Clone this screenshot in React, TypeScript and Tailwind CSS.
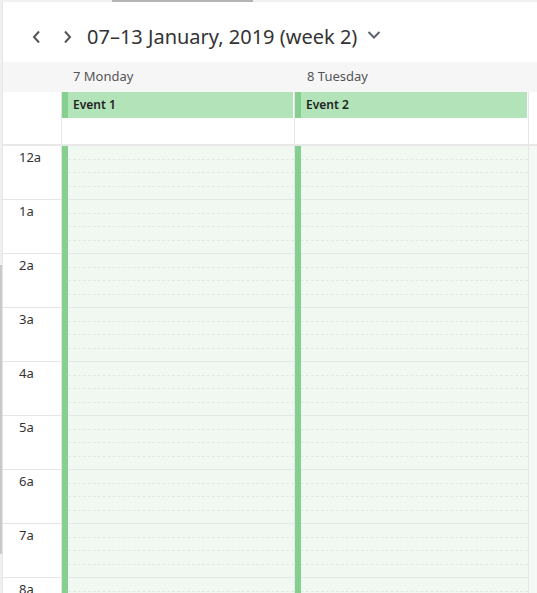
import React from "react";

const hours = ["12a", "1a", "2a", "3a", "4a", "5a", "6a", "7a", "8a", "9a"];

function HourBlock({ label }: { label?: string }) {
  return (
    <div className="h-[54px] shrink-0 border-b border-[#e6e6e6] flex flex-col">
      {label !== undefined ? (
        <div className="pl-[16px] pt-[3px] text-[13px] leading-[16px] text-[#333]">{label}</div>
      ) : (
        <>
          <div className="flex-1 border-b border-dashed border-[#e3e8e3]" />
          <div className="flex-1 border-b border-dashed border-[#e3e8e3]" />
          <div className="flex-1 border-b border-dashed border-[#e3e8e3]" />
          <div className="flex-1" />
        </>
      )}
    </div>
  );
}

function DayColumn({ event, width }: { event: string; width: string }) {
  return (
    <div className={`${width} shrink-0 flex flex-col border-l border-[#e6e6e6]`}>
      <div className="h-[52px] shrink-0 bg-white">
        <div className="h-[26px] mr-[1px] flex bg-[#b3e3b8]">
          <div className="w-[6px] bg-[#86d08f]" />
          <div className="pl-[5px] text-[12px] font-semibold leading-[26px] text-[#222]">{event}</div>
        </div>
      </div>
      <div className="flex shrink-0 border-t-2 border-[#e8e8e8]">
        <div className="w-[6px] bg-[#86d08f]" />
        <div className="flex-1 bg-[#f1f7f1] flex flex-col">
          {hours.map((h) => (
            <HourBlock key={h} />
          ))}
        </div>
      </div>
    </div>
  );
}

export default function App() {
  return (
    <div
      className="w-[537px] h-[593px] overflow-hidden bg-white flex flex-col"
      style={{ fontFamily: '"Noto Sans", "Open Sans", sans-serif' }}
    >
      {/* top scrollbar */}
      <div className="h-[2px] shrink-0 bg-[#f0f0f0] flex">
        <div className="w-[112px]" />
        <div className="w-[141px] bg-[#b5b5b5]" />
      </div>
      <div className="flex flex-1 min-h-0">
        {/* left scrollbar strip */}
        <div className="w-[2px] shrink-0 bg-[#f0f0f0] flex flex-col">
          <div className="h-[263px] shrink-0" />
          <div className="h-[289px] shrink-0 bg-[#c9c9c9]" />
        </div>
        <div className="flex-1 flex flex-col border-l border-[#e6e6e6] min-w-0 overflow-hidden">
          {/* title row */}
          <div className="h-[60px] shrink-0 flex items-center pt-[10px]">
            <div className="w-[28px]" />
            <svg width="12" height="14" viewBox="0 0 12 14" className="text-[#555]">
              <polyline points="8,1.5 3,7 8,12.5" fill="none" stroke="currentColor" strokeWidth="2" />
            </svg>
            <div className="w-[19px]" />
            <svg width="12" height="14" viewBox="0 0 12 14" className="text-[#555]">
              <polyline points="3,1.5 8,7 3,12.5" fill="none" stroke="currentColor" strokeWidth="2" />
            </svg>
            <div className="w-[13px]" />
            <div className="text-[20px] leading-[24px] text-[#333] whitespace-nowrap">
              07–13 January, 2019 (week 2)
            </div>
            <div className="w-[10px]" />
            <svg width="14" height="10" viewBox="0 0 14 10" className="text-[#5a6470] mt-[-4px]">
              <polyline points="1.5,2 7,7.5 12.5,2" fill="none" stroke="currentColor" strokeWidth="2" />
            </svg>
          </div>
          {/* day header */}
          <div className="h-[30px] shrink-0 bg-[#f6f6f6] flex text-[13px] leading-[29px] text-[#555]">
            <div className="w-[58px] shrink-0" />
            <div className="w-[234px] shrink-0 pl-[12px]">7 Monday</div>
            <div className="w-[234px] shrink-0 pl-[12px]">8 Tuesday</div>
          </div>
          {/* body */}
          <div className="flex flex-1 min-h-0">
            <div className="w-[58px] shrink-0 flex flex-col">
              <div className="h-[52px] shrink-0" />
              <div className="shrink-0 border-t-2 border-[#e8e8e8] flex flex-col">
                {hours.map((h) => (
                  <HourBlock key={h} label={h} />
                ))}
              </div>
            </div>
            <DayColumn event="Event 1" width="w-[233px]" />
            <DayColumn event="Event 2" width="w-[234px]" />
            <div className="flex-1 flex flex-col border-l border-[#e6e6e6]">
              <div className="h-[52px] shrink-0 bg-white" />
              <div className="flex-1 border-t-2 border-[#e8e8e8] bg-[#f5f9f5]" />
            </div>
          </div>
        </div>
      </div>
    </div>
  );
}
